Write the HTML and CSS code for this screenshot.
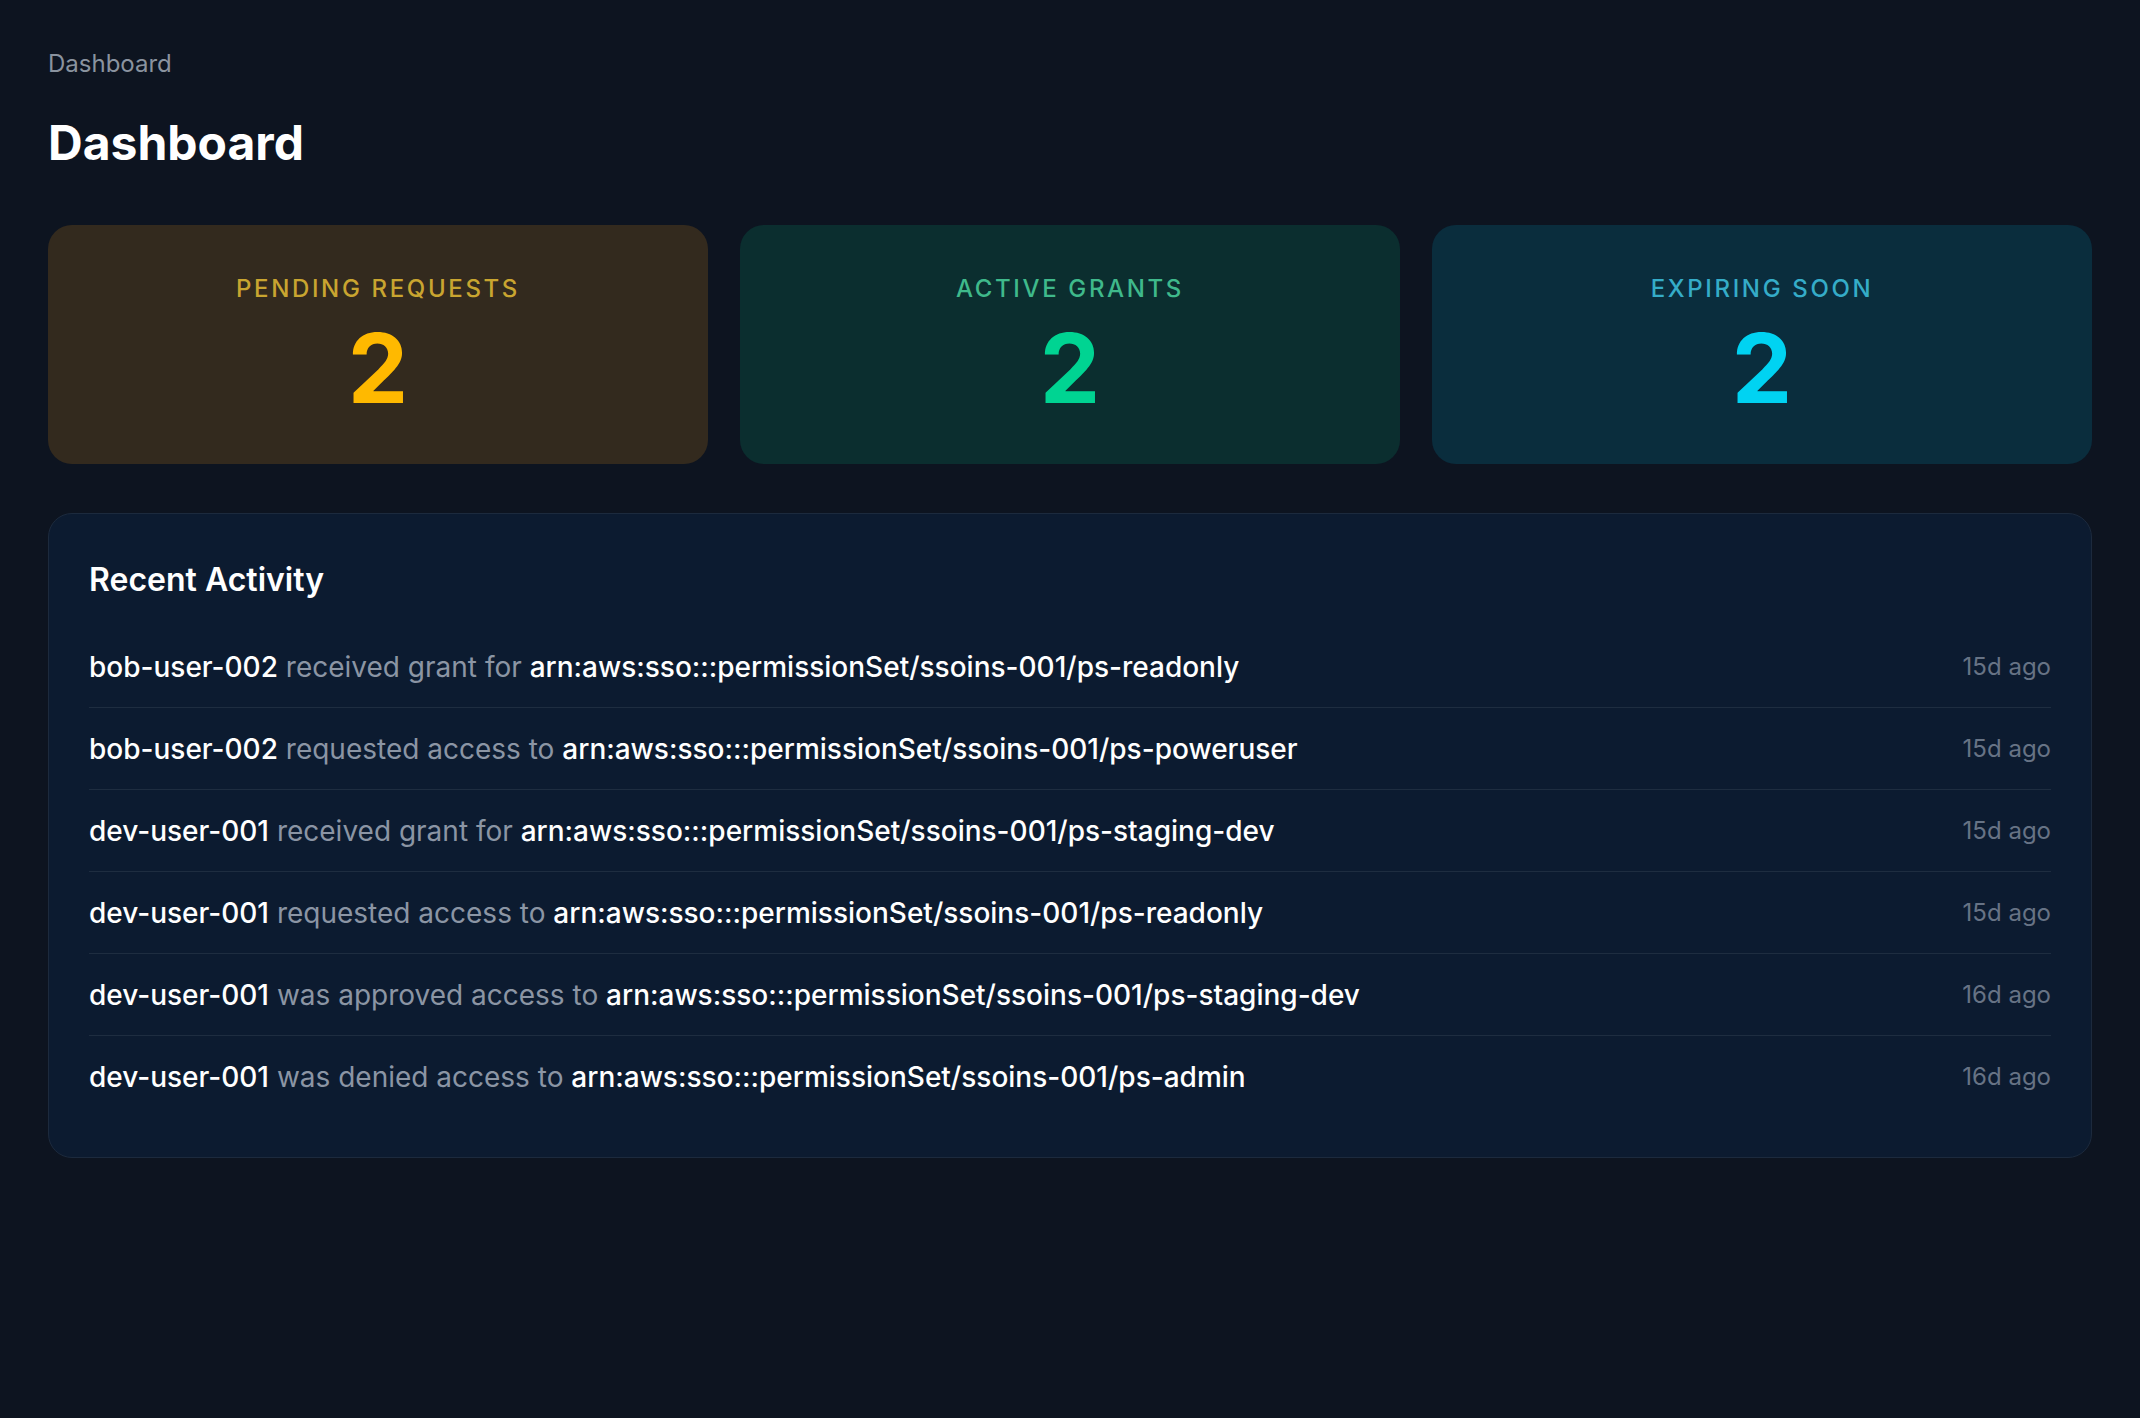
FILE: index.html
```html
<!DOCTYPE html>
<html lang="en">
<head>
<meta charset="utf-8">
<title>Dashboard</title>
<link rel="stylesheet" href="styles.css">
</head>
<body>
<main class="page">
  <nav class="breadcrumb">Dashboard</nav>
  <h1 class="title">Dashboard</h1>

  <section class="stats">
    <div class="stat stat-pending">
      <div class="stat-label">Pending Requests</div>
      <div class="stat-value">2</div>
    </div>
    <div class="stat stat-active">
      <div class="stat-label">Active Grants</div>
      <div class="stat-value">2</div>
    </div>
    <div class="stat stat-expiring">
      <div class="stat-label">Expiring Soon</div>
      <div class="stat-value">2</div>
    </div>
  </section>

  <section class="panel">
    <h2 class="panel-title">Recent Activity</h2>
    <ul class="activity">
      <li class="row">
        <span class="msg"><span class="who">bob-user-002</span> <span class="act">received grant for</span> <span class="res">arn:aws:sso:::permissionSet/ssoins-001/ps-readonly</span></span>
        <span class="when">15d ago</span>
      </li>
      <li class="row">
        <span class="msg"><span class="who">bob-user-002</span> <span class="act">requested access to</span> <span class="res">arn:aws:sso:::permissionSet/ssoins-001/ps-poweruser</span></span>
        <span class="when">15d ago</span>
      </li>
      <li class="row">
        <span class="msg"><span class="who">dev-user-001</span> <span class="act">received grant for</span> <span class="res">arn:aws:sso:::permissionSet/ssoins-001/ps-staging-dev</span></span>
        <span class="when">15d ago</span>
      </li>
      <li class="row">
        <span class="msg"><span class="who">dev-user-001</span> <span class="act">requested access to</span> <span class="res">arn:aws:sso:::permissionSet/ssoins-001/ps-readonly</span></span>
        <span class="when">15d ago</span>
      </li>
      <li class="row">
        <span class="msg"><span class="who">dev-user-001</span> <span class="act">was approved access to</span> <span class="res">arn:aws:sso:::permissionSet/ssoins-001/ps-staging-dev</span></span>
        <span class="when">16d ago</span>
      </li>
      <li class="row">
        <span class="msg"><span class="who">dev-user-001</span> <span class="act">was denied access to</span> <span class="res">arn:aws:sso:::permissionSet/ssoins-001/ps-admin</span></span>
        <span class="when">16d ago</span>
      </li>
    </ul>
  </section>
</main>
</body>
</html>
```

FILE: styles.css
```css
* { box-sizing: border-box; }

html, body {
  margin: 0;
  padding: 0;
  background: #0d1420;
  color: #ffffff;
  font-family: Inter, "Noto Sans", "Liberation Sans", sans-serif;
}

body { min-height: 1418px; }

.page {
  padding: 48px;
}

.breadcrumb {
  font-size: 24px;
  line-height: 32px;
  color: #8a939f;
}

.title {
  margin: 35px 0 0 0;
  font-size: 48px;
  line-height: 56px;
  font-weight: 700;
  color: #ffffff;
}

.stats {
  display: grid;
  grid-template-columns: repeat(3, 1fr);
  gap: 32px;
  margin-top: 54px;
}

.stat {
  border-radius: 24px;
  padding: 48px 24px;
  text-align: center;
}

.stat-label {
  font-size: 24px;
  line-height: 32px;
  font-weight: 500;
  letter-spacing: 0.11em;
  text-transform: uppercase;
}

.stat-value {
  margin-top: 15px;
  font-size: 96px;
  line-height: 96px;
  font-weight: 700;
}

.stat-pending { background: #332a1e; }
.stat-pending .stat-label { color: #c9a530; }
.stat-pending .stat-value { color: #ffb900; }

.stat-active { background: #0b2e2f; }
.stat-active .stat-label { color: #3fb98b; }
.stat-active .stat-value { color: #00d492; }

.stat-expiring { background: #0a2d3d; }
.stat-expiring .stat-label { color: #35acc8; }
.stat-expiring .stat-value { color: #00d3f2; }

.panel {
  margin-top: 49px;
  background: #0c1b30;
  border: 1px solid #1c2a3d;
  border-radius: 24px;
  padding: 40px;
}

.panel-title {
  margin: 2px 0 0 0;
  font-size: 32px;
  line-height: 48px;
  font-weight: 600;
  color: #ffffff;
}

.activity {
  list-style: none;
  margin: 22px 0 0 0;
  padding: 0;
}

.row {
  display: flex;
  align-items: center;
  justify-content: space-between;
  gap: 24px;
  padding: 20px 0 19px 0;
  border-bottom: 1px solid #1e2d40;
  font-size: 28px;
  line-height: 42px;
}

.row:last-child { border-bottom: none; }

.who, .res { color: #ffffff; font-weight: 500; }
.act { color: #8b95a4; }

.when {
  flex: none;
  font-size: 24px;
  line-height: 32px;
  color: #677385;
}
```
